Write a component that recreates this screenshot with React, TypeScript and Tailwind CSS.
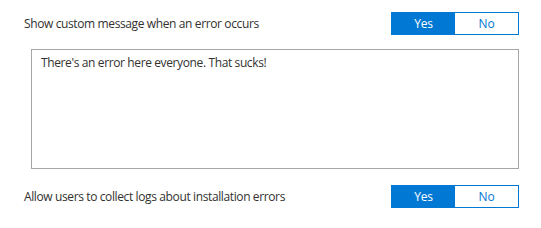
import React from "react";

function Toggle() {
  return (
    <div className="flex h-[23px] w-[128px] border border-[#0078d4] text-[12px] leading-none tracking-[-0.2px]">
      <div className="flex w-[63px] items-center justify-center bg-[#0078d4] text-white">Yes</div>
      <div className="flex flex-1 items-center justify-center bg-white text-[#0078d4]">No</div>
    </div>
  );
}

export default function App() {
  return (
    <div
      className="h-[228px] w-[541px] bg-white pl-[24px] pr-[22px] pt-[12px] text-[12px] tracking-[-0.38px] text-[#323130]"
      style={{ fontFamily: '"Segoe UI", "Open Sans", "Noto Sans", sans-serif' }}
    >
      <div className="flex items-center justify-between">
        <span>Show custom message when an error occurs</span>
        <Toggle />
      </div>
      <div className="ml-[7px] mt-[14px] h-[120px] border border-[#a6a6a6] px-[9px] pt-[4px]">
        There's an error here everyone. That sucks!
      </div>
      <div className="mt-[16px] flex items-center justify-between">
        <span>Allow users to collect logs about installation errors</span>
        <Toggle />
      </div>
    </div>
  );
}
